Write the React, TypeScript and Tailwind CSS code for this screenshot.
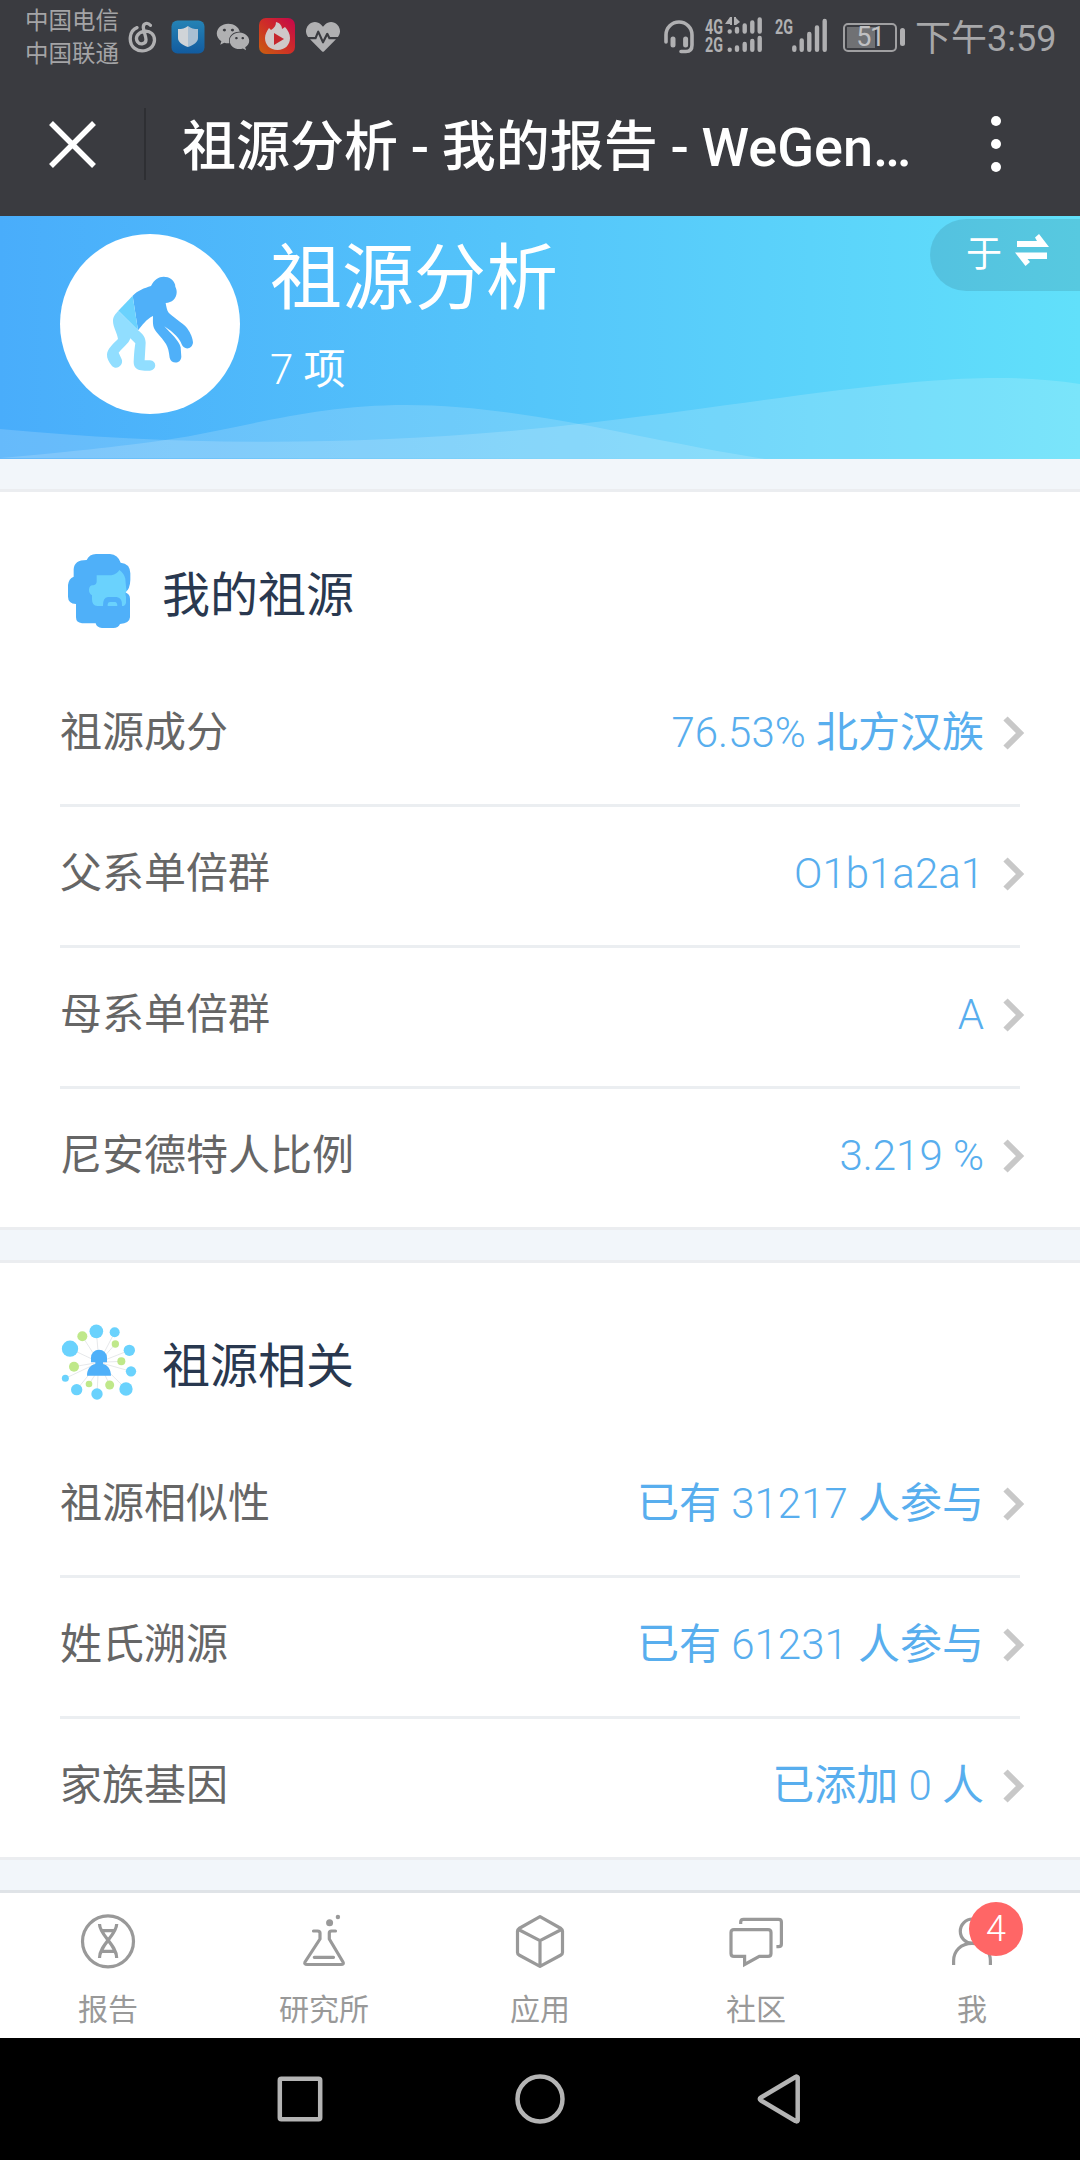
import React from 'react';
import { FaHeartbeat, FaWeixin } from 'react-icons/fa';

interface Item {
  label: string;
  value: string;
}

interface SectionProps {
  title: string;
  icon: React.ReactNode;
  items: Item[];
}

const ancestryItems: Item[] = [
  { label: '祖源成分', value: '76.53% 北方汉族' },
  { label: '父系单倍群', value: 'O1b1a2a1' },
  { label: '母系单倍群', value: 'A' },
  { label: '尼安德特人比例', value: '3.219 %' },
];

const relatedItems: Item[] = [
  { label: '祖源相似性', value: '已有 31217 人参与' },
  { label: '姓氏溯源', value: '已有 61231 人参与' },
  { label: '家族基因', value: '已添加 0 人' },
];

// Latin and digits are light, Chinese keeps the regular weight
const MixedText: React.FC<{ text: string }> = ({ text }) => (
  <>
    {text.split(/([\u4e00-\u9fff]+)/).map((part, i) => (
      <span key={i} className={i % 2 === 1 ? 'font-normal' : 'font-light'}>
        {part}
      </span>
    ))}
  </>
);

const SignalIcons: React.FC = () => (
  <svg className="w-[124px] h-[40px] shrink-0" viewBox="0 0 124 40" fill="#b0b0b2">
    <g fontFamily="Roboto" fontWeight="700" fontSize="20">
      <text x="0" y="18" textLength="18" lengthAdjust="spacingAndGlyphs">4G</text>
      <text x="0" y="36" textLength="18" lengthAdjust="spacingAndGlyphs">2G</text>
      <text x="70" y="18" textLength="18" lengthAdjust="spacingAndGlyphs">2G</text>
    </g>
    <path d="M25 1v7h-5zM25 1h2v8h-2zM29 1h2v8h-2zM31 9V2l4 4z" />
    <g stroke="#b0b0b2" strokeWidth="4.4" strokeLinecap="round">
      <path d="M24.7 15.500v.1M32 13V15.500M39.700 9.500V15.500M47.300 6.500V15.500M54.700 3.500V15.500" />
      <path d="M24.700 33.700v.1M32 31.500v2.300M39.700 28v5.800M47.300 25v8.800M54.700 22v11.800" />
      <path d="M89.300 31.500v2.300M96.700 24.500v9.300M104.300 18v15.800M112 11.500v22.300M119.700 5v28.800" />
    </g>
  </svg>
);

const StatusBar: React.FC = () => (
  <div className="h-[72px] flex justify-between text-[#b0b0b2]">
    <div className="flex pl-[25px]">
      <div className="w-[96px] pt-[5px] text-[23.5px] leading-[33px] whitespace-nowrap text-[#a4a4a6]">
        <div>中国电信</div>
        <div>中国联通</div>
      </div>
      <svg className="w-[31px] h-[34px] mt-[20px] ml-[6px]" viewBox="22 30 93 102" fill="none" stroke="#b0b0b2" strokeWidth="10" strokeLinecap="round">
        <path d="M52 53C28 62 25 100 45 115C65 130 99 122 104 95C107 74 91 60 72 64C52 68 46 85 54 96C62 106 79 102 79 89C79 80 72 64 71 53C70 39 84 36 92 46" />
      </svg>
      <svg className="w-[34px] h-[34px] mt-[20px] ml-[13px]" viewBox="0 0 34 34">
        <defs>
          <linearGradient id="guard" x1="0" y1="0" x2="0" y2="1">
            <stop offset="0" stopColor="#2583b5" />
            <stop offset="1" stopColor="#125b9f" />
          </linearGradient>
        </defs>
        <rect x=".5" y=".5" width="33" height="33" rx="6" fill="url(#guard)" />
        <path d="M17 6c3 2.500 6 3 10 3v9c0 4-4 7-10 9z" fill="#a9bfd2" />
        <path d="M17 6c-3 2.500-6 3-10 3v9c0 4 4 7 10 9z" fill="#d0d4d8" />
      </svg>
      <FaWeixin className="w-[34px] h-[34px] mt-[20px] ml-[11px]" />
      <svg className="w-[36px] h-[36px] mt-[18px] ml-[9px]" viewBox="0 0 36 36">
        <defs>
          <linearGradient id="fire" x1="0" y1="1" x2="1" y2="0">
            <stop offset="0" stopColor="#c9600f" />
            <stop offset=".5" stopColor="#cf2d28" />
            <stop offset="1" stopColor="#c4064c" />
          </linearGradient>
        </defs>
        <rect width="36" height="36" rx="7" fill="url(#fire)" />
        <path d="M17 4c4 1 6 4 6 7l3-2c3 3 5 7 5 11 0 7-5 12-12.500 12S6 27 6 20c0-4 2-7 4-10l2 2c3-2 5-4 5-8z" fill="#cfc8c9" />
        <path d="M15 15l10 6-10 6z" fill="#c6252d" />
      </svg>
      <FaHeartbeat className="w-[34px] h-[34px] mt-[20px] ml-[11px]" />
    </div>
    <div className="flex pr-[24px]">
      <svg className="w-[32px] h-[36px] mt-[18px]" viewBox="0 0 32 36" fill="none" stroke="#b0b0b2" strokeLinecap="round">
        <path d="M3 24V17a13 13 0 0 1 26 0v10c0 4-2 6.500-6 6.500h-5" strokeWidth="3.600" />
        <path d="M10 21v6M22.600 21v6" strokeWidth="5" />
      </svg>
      <div className="ml-[10px] mt-[16px]">
        <SignalIcons />
      </div>
      <div className="flex items-center h-[30px] mt-[22px] ml-[14px]">
        <div className="relative w-[54px] h-[29px] border-2 border-[#a0a0a2] rounded-[5px] text-[27px] text-[#c0c0c2]">
          <div className="w-[28px] h-[21px] m-[2px] bg-[#707174]"></div>
          <span className="absolute inset-0 flex items-center justify-center tracking-[-1.5px]">51</span>
        </div>
        <div className="w-[5px] h-[18px] ml-[3px] rounded-full bg-[#b0b0b2]"></div>
      </div>
      <div className="w-[141px] ml-[10px] mt-[13px] text-[36px] leading-[52px] whitespace-nowrap text-[#a7a7a9]">下午3:59</div>
    </div>
  </div>
);

const TitleBar: React.FC = () => (
  <div className="h-[144px] flex items-center text-white">
    <svg className="w-[48px] h-[48px] ml-[48px]" viewBox="0 0 48 48" stroke="white" strokeWidth="5.500">
      <path d="M3 3l43 43M46 3L3 46" />
    </svg>
    <div className="w-[2px] h-[72px] ml-[48px] bg-[#2e2f33]"></div>
    <h1 className="w-[780px] ml-[36px] pt-[7px] text-[54px] leading-[72px] font-medium whitespace-nowrap [word-spacing:-0.7px]">
      祖源分析 - 我的报告 - WeGen…
    </h1>
    <div className="flex flex-col gap-[13px] ml-[29px]">
      <span className="w-[10px] h-[10px] rounded-full bg-white"></span>
      <span className="w-[10px] h-[10px] rounded-full bg-white"></span>
      <span className="w-[10px] h-[10px] rounded-full bg-white"></span>
    </div>
  </div>
);

const Banner: React.FC = () => (
  <div className="relative h-[243px] flex bg-[linear-gradient(90deg,#49adfb_0%,#55c6fa_50%,#61e0fa_100%)] text-white">
    <svg className="absolute inset-0 w-full h-full" viewBox="0 0 1080 243" fill="white" fillOpacity="0.16">
      <path d="M0 213C200 232 400 230 600 205.500C690 195 760 184 840 174C940 162 1010 157 1080 168V243H0z" />
      <path d="M0 242C80 235 130 229 165 224C240 213 310 189 406 189C480 189 560 204 600 212C670 226 720 236 765 243z" />
    </svg>
    <div className="relative w-[180px] h-[180px] ml-[60px] mt-[18px] rounded-full bg-white">
      <svg viewBox="0 0 180 180">
        <g transform="translate(36 26) scale(.3333)">
          <path
            fill="#4fb0f9"
            d="M165 78C175 58 188 50 203 50C220 50 234 60 238 76C235 78 243 86 242 98C241 115 228 128 209 129C211 140 213 150 217 157C225 168 262 190 273 204C285 220 290 235 291 247C290 268 264 272 257 253C252 238 235 218 205 199C225 222 248 240 254 262L256 290C255 312 226 314 221 293C219 275 216 262 210 252C195 228 175 215 172 198C170 188 171 178 171 168C150 178 140 195 126 211L110 107C125 92 145 84 165 78z"
          />
          <path fill="#6ad2fd" d="M110 107L67 152L126 211z" />
          <path
            fill="#91deff"
            d="M67 152L126 211C140 222 149 232 149 248L146 301H162C183 302 183 331 162 332C150 333 138 332 130 330C118 326 113 318 113 305C114 280 116 262 118 250L103 235C98 252 80 262 68 278L77 298C84 315 62 332 48 318C38 306 32 295 33 283C34 268 50 252 66 237C64 220 51 200 51 183C51 170 58 162 67 152z"
          />
        </g>
      </svg>
    </div>
    <div className="relative ml-[30px]">
      <h2 className="mt-[9px] text-[72px] leading-[108px]">祖源分析</h2>
      <p className="mt-[5px] text-[42px] leading-[63px]">
        <MixedText text="7 项" />
      </p>
    </div>
    <div className="absolute right-0 top-[3px] w-[150px] h-[72px] rounded-l-full bg-black/10 flex pl-[36px]">
      <span className="text-[36px] leading-[72px]">于</span>
      <svg className="w-[34px] h-[33px] mt-[15px] ml-[13px]" viewBox="0 0 34 33" fill="white">
        <path d="M2 7h20l-2-3.500L24 0l10 13H2z" />
        <path d="M32 25H12.500l2.500 3-4.500 4L0 18.500h32z" />
      </svg>
    </div>
  </div>
);

const BeardedHeadIcon: React.FC = () => (
  <svg className="w-[80px] h-[80px]" viewBox="60 60 240 240">
    <path
      fill="#4fb0f9"
      d="M140 90Q148 72 168 72H210Q234 74 242 98Q270 100 271 130V150Q270 178 256 187Q270 193 270 206V262Q269 280 240 282Q235 294 220 294H186Q170 293 167 280H126Q108 278 108 262V222Q84 220 84 200V165Q86 146 101 140V118Q102 90 140 90z"
    />
    <path
      fill="#6ad2fd"
      d="M170 136H214Q232 132 238 120Q252 130 256 146Q258 175 260 182Q254 188 258 200V218Q256 228 246 228Q248 204 230 201H204Q188 203 189 228H172Q156 228 156 208V196Q146 190 147 178Q149 164 160 166Q170 164 170 154z"
    />
    <path fill="#6ad2fd" d="M203 228V223Q204 216 210 216H225Q232 217 232 228z" />
  </svg>
);

const NetworkIcon: React.FC = () => (
  <svg className="w-[80px] h-[80px]" viewBox="60 91 240 240">
    <path
      stroke="#d9dde0"
      strokeWidth="2"
      d="M177 215L169 122M177 215L127 137M177 215L90 174M177 215L102 228M177 215L76 263M177 215L110 297M177 235L147 280M175 235L171 310M177 215L209 283M177 215L258 295M177 215L273 242M177 215L244 212M177 215L268 179M177 215L226 160M177 215L224 125"
    />
    <g fill="#6ad2fd">
      <circle cx="169" cy="122" r="20.500" />
      <circle cx="224" cy="125" r="15" />
      <circle cx="90" cy="174" r="24.500" />
      <circle cx="268" cy="179" r="17" />
      <circle cx="273" cy="242" r="15.500" />
      <circle cx="76" cy="263" r="10.500" />
      <circle cx="110" cy="297" r="17" />
      <circle cx="171" cy="310" r="17" />
      <circle cx="258" cy="295" r="20" />
    </g>
    <g fill="#bfe88a">
      <circle cx="127" cy="137" r="15" />
      <circle cx="226" cy="160" r="11" />
      <circle cx="102" cy="228" r="15" />
      <circle cx="244" cy="212" r="12" />
      <circle cx="147" cy="280" r="10" />
      <circle cx="209" cy="283" r="13.500" />
    </g>
    <path
      fill="#4fb0f9"
      d="M153 215V201A24 24 0 0 1 201 201V215H189V220C203 223 213 236 213 255H141C141 236 151 223 166 220V215z"
    />
  </svg>
);

const Section: React.FC<SectionProps> = ({ title, icon, items }) => (
  <section className="bg-white border-y-[3px] border-[#ebedf0] px-[60px]">
    <div className="flex h-[174px] pt-[58px]">
      {icon}
      <h3 className="ml-[22px] mt-[10px] text-[48px] leading-[72px] text-[#29384f]">{title}</h3>
    </div>
    <ul className="divide-y-[3px] divide-[#ebeef1]">
      {items.map((item) => (
        <li key={item.label} className="flex items-center h-[141px] last:h-[138px]">
          <span className="flex-1 text-[42px] leading-[63px] pb-[6px] text-[#666]">{item.label}</span>
          <span className="text-[42px] leading-[63px] pb-[6px] text-[#58aeee]">
            <MixedText text={item.value} />
          </span>
          <svg className="w-[22px] h-[34px] ml-[19px] -mr-[5px] mb-[4px]" viewBox="0 0 22 34" fill="none" stroke="#c8c8c8" strokeWidth="6">
            <path d="M2.500 2.500L17 17L2.500 31.500" />
          </svg>
        </li>
      ))}
    </ul>
  </section>
);

const tabs = [
  {
    label: '报告',
    icon: (
      <>
        <circle cx="30" cy="30.300" r="25.500" />
        <path strokeLinecap="butt" d="M21.500 13C21.500 24 38.700 34 38.700 47M38.700 13C38.700 24 21.500 34 21.500 47M23 19.700h14M23 40.300h14" />
      </>
    ),
  },
  {
    label: '研究所',
    icon: (
      <>
        <path d="M19.500 20H23.500Q26 20 26 22V28L11 51Q10 53.500 13 53.500H47Q50.500 53.500 49 51L35.300 28V22Q35.300 20 37.500 20H41.500M20.300 46.300H39.500" />
        <circle cx="35.600" cy="11.700" r="3.500" fill="#999" stroke="none" />
        <circle cx="43.900" cy="6" r="2.200" fill="#999" stroke="none" />
      </>
    ),
  },
  {
    label: '应用',
    icon: <path d="M30 5.700L51 17.500Q52.500 18.500 52.500 20V41.500Q52.500 43 51 44L30 55.300L9 44Q7.500 43 7.500 41.500V20Q7.500 18.500 9 17.500zM8.500 18.500L30 29.700L51.500 18.500M30 29.700V55" />,
  },
  {
    label: '社区',
    icon: (
      <>
        <path strokeLinecap="butt" d="M14.700 13V11Q14.700 8.300 17.500 8.300H52.500Q55.400 8.300 55.400 11V33Q55.400 35.700 52.500 35.700H50.400" />
        <path strokeLinejoin="miter" d="M8 18.600H42Q45 18.600 45 21.500V42.500Q45 45.400 42 45.400H33.300L18.600 53.500V45.400H8Q5 45.400 5 42.500V21.500Q5 18.600 8 18.600z" />
      </>
    ),
  },
  {
    label: '我',
    badge: '4',
    icon: (
      <>
        <circle cx="30.500" cy="20.200" r="12.200" />
        <path strokeLinecap="butt" d="M11.600 54V50C11.600 40 19 32.400 30 32.400S48.400 40 48.400 50V54" />
      </>
    ),
  },
];

const TabBar: React.FC = () => (
  <nav className="h-[148px] border-t-[3px] border-[#dfe3e7] bg-white grid grid-cols-5">
    {tabs.map((tab) => (
      <div key={tab.label} className="relative flex flex-col items-center pt-[18px] text-[#999]">
        <svg className="w-[60px] h-[60px]" viewBox="0 0 60 60" fill="none" stroke="#999" strokeWidth="3.200" strokeLinecap="round" strokeLinejoin="round">
          {tab.icon}
        </svg>
        <span className="mt-[16px] text-[30px] leading-[45px]">{tab.label}</span>
        {tab.badge && (
          <span className="absolute left-[105px] top-[9px] w-[54px] h-[54px] rounded-full bg-[#ff6666] text-white text-[36px] leading-[54px] text-center font-light">
            {tab.badge}
          </span>
        )}
      </div>
    ))}
  </nav>
);

const SystemNav: React.FC = () => (
  <div className="h-[122px] bg-black flex items-center justify-center gap-[190px]">
    <svg className="w-[50px] h-[50px]" viewBox="0 0 50 50" fill="none" stroke="#b4b4b4" strokeWidth="4.500">
      <rect x="4.800" y="4.800" width="40.400" height="40.400" rx="1.500" />
    </svg>
    <svg className="w-[50px] h-[50px]" viewBox="0 0 50 50" fill="none" stroke="#b4b4b4" strokeWidth="4.500">
      <circle cx="25" cy="25" r="22.500" />
    </svg>
    <svg className="w-[50px] h-[50px]" viewBox="-4 0 50 50" fill="none" stroke="#b4b4b4" strokeWidth="4.500" strokeLinejoin="round">
      <path d="M38.700 3.500V46.500Q38 48 36.500 47L2 26.500Q-.5 25 2 23.500L36.500 3Q38 2 38.700 3.500z" />
    </svg>
  </div>
);

const App: React.FC = () => {
  return (
    <div className="w-[1080px] h-[2160px] flex flex-col overflow-hidden bg-[#f2f6fa] font-[Roboto,'Noto_Sans_CJK_SC',sans-serif]">
      <header className="h-[216px] bg-[#3a3b40]">
        <StatusBar />
        <TitleBar />
      </header>
      <Banner />
      <main className="flex-1 flex flex-col gap-[30px] pt-[30px]">
        <Section title="我的祖源" icon={<BeardedHeadIcon />} items={ancestryItems} />
        <Section title="祖源相关" icon={<NetworkIcon />} items={relatedItems} />
      </main>
      <TabBar />
      <SystemNav />
    </div>
  );
};

export default App;
